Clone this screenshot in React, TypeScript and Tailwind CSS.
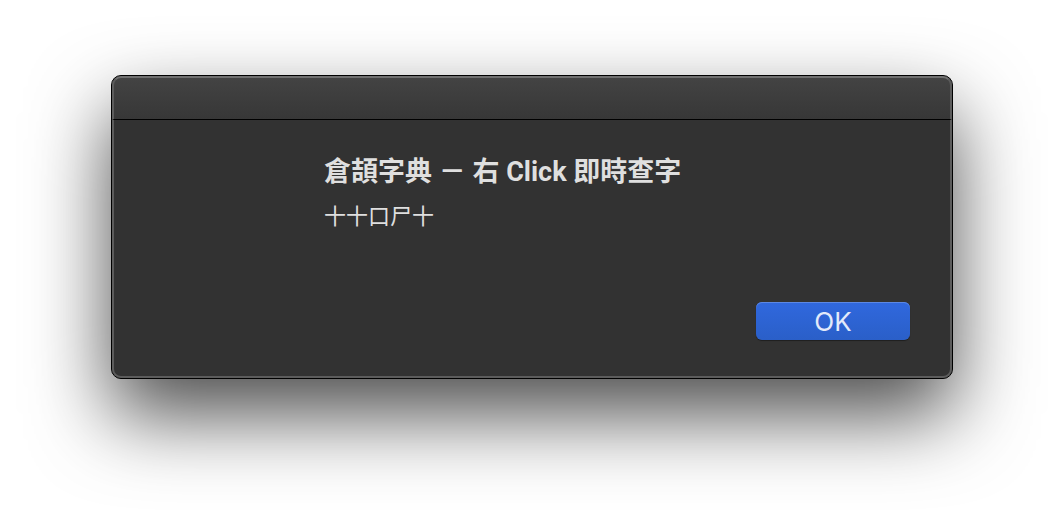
export default function App() {
  return (
    <main className="min-h-screen overflow-hidden bg-white px-[111px] pt-[75px] pb-[147px] font-['Inter','Noto_Sans_CJK_TC',sans-serif]">
      <section
        role="dialog"
        aria-labelledby="title"
        aria-describedby="message"
        className="rounded-[10px] border border-black bg-[#323232] shadow-[0_36px_80px_rgba(0,0,0,0.7)]"
      >
        <header className="h-11 rounded-t-[9px] border-x-2 border-t-2 border-b border-x-[#5c5c5c] border-t-[#707070] border-b-black bg-linear-to-b from-[#434343] to-[#373737]" />
        <div className="flex flex-col rounded-b-[9px] border-x-2 border-b-2 border-[#5c5c5c] pt-[34px] pr-10 pb-9 pl-[210px]">
          <h1
            id="title"
            className="font-['Roboto','Noto_Sans_CJK_TC',sans-serif] text-[27px] leading-9 font-bold text-[#dfdfdf]"
          >
            倉頡字典 － 右 Click 即時查字
          </h1>
          <p id="message" className="mt-2 text-[22px] leading-9 text-[#dfdfdf]">
            十十口尸十
          </p>
          <button
            type="button"
            className="mt-[68px] h-[38px] w-[154px] self-end rounded-md bg-linear-to-b from-[#3068de] to-[#2a5fc8] pt-0.5 text-[26px] leading-9 text-[#e2eafa] shadow-[inset_0_1px_0_#5c88e4,0_1px_1px_rgba(0,0,0,0.4)]"
          >
            OK
          </button>
        </div>
      </section>
    </main>
  );
}
